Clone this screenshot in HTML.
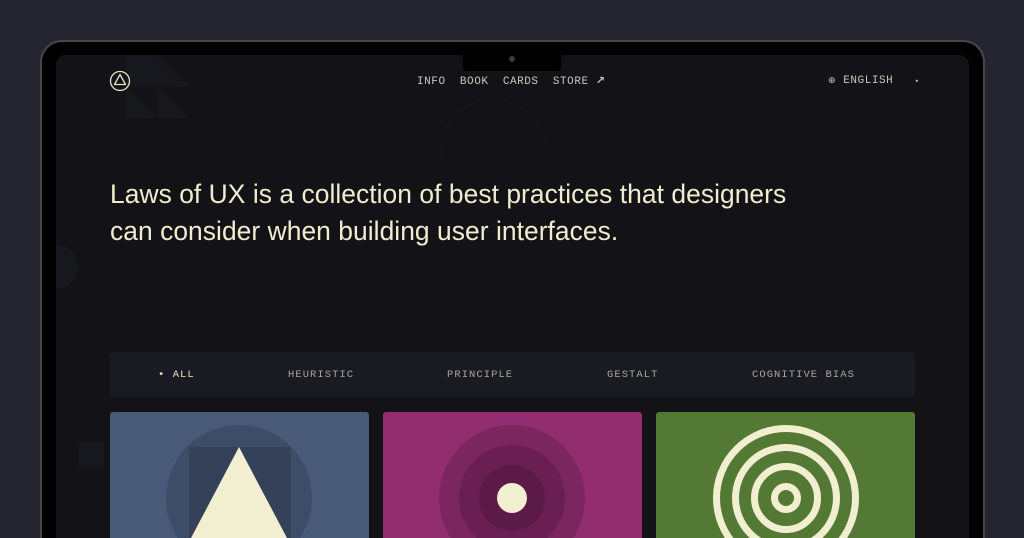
<!DOCTYPE html>
<html><head><style>
*{margin:0;padding:0;box-sizing:border-box}
html,body{width:1024px;height:538px;overflow:hidden}
body{background:#24252f;position:relative;font-family:"Liberation Sans",sans-serif}
.frame{position:absolute;left:40px;top:40px;width:945px;height:498px;border-radius:22px 22px 0 0;background:#000;border:2px solid #45464d;border-bottom:none}
.screen{position:absolute;left:56px;top:55px;width:913px;height:483px;background:#131317;border-radius:10px 10px 0 0;overflow:hidden}
.notch{position:absolute;left:463px;top:55px;width:98px;height:16px;background:#000;border-radius:0 0 3px 3px}
.cam{position:absolute;left:509px;top:56px;width:6px;height:6px;border-radius:50%;background:#3a3a40}
.nav{position:absolute;top:74px;font-family:"Liberation Mono",monospace;font-size:11px;color:#c9c7b6;letter-spacing:.55px}
.hero{position:absolute;left:110px;top:176px;font-size:26.4px;line-height:37px;color:#f0eccf;letter-spacing:.05px}
.bar{position:absolute;left:110px;top:352px;width:805px;height:45px;background:#1a1b22;border-radius:3px}
.f{position:absolute;top:369px;font-family:"Liberation Mono",monospace;font-size:10.5px;color:#a9a79a;letter-spacing:1.05px}
.card{position:absolute;top:412px;width:259px;height:126px;border-radius:3px 3px 0 0;overflow:hidden}
.card svg{display:block}
</style></head><body>
<div class="frame"></div>
<div class="screen">
<svg width="913" height="483" style="position:absolute;left:0;top:0">
<g fill="#17181d">
<polygon points="70,0 101,0 101,32"/><polygon points="101,0 133,32 101,32"/>
<polygon points="70,32 101,63 70,63"/><polygon points="101,32 133,63 101,63"/>
<polygon points="70,0 101,32 70,32"/>
<circle cx="0" cy="212" r="22"/>
<rect x="23" y="387" width="25" height="25"/>
</g>
<path d="M385 105 A50 50 0 0 1 490 90" stroke="#17181c" fill="none"/>
</svg>
</div>
<div class="notch"></div><div class="cam"></div>
<svg style="position:absolute;left:109px;top:70px" width="22" height="22" viewBox="0 0 22 22"><circle cx="11" cy="11" r="9.5" fill="none" stroke="#e8e4c4" stroke-width="1.3"/><path d="M11 4.5 L16.5 14.5 L5.5 14.5 Z" fill="none" stroke="#e8e4c4" stroke-width="1.3" stroke-linejoin="round"/></svg>
<div class="nav" style="left:417px">INFO&nbsp;&nbsp;BOOK&nbsp;&nbsp;CARDS&nbsp;&nbsp;STORE <span style="font-family:'DejaVu Sans';font-weight:bold">↗</span></div>
<div class="nav" style="left:828px;top:75px"><span style="font-family:'DejaVu Sans';font-size:9px">⊕</span>&nbsp;ENGLISH&nbsp;&nbsp;&nbsp;<span style="font-size:7px">▾</span></div>
<div class="hero">Laws of UX is a collection of best practices that designers<br>can consider when building user interfaces.</div>
<div class="bar"></div>
<div class="f" style="left:158px;color:#e8e4c4">• ALL</div>
<div class="f" style="left:288px">HEURISTIC</div>
<div class="f" style="left:447px">PRINCIPLE</div>
<div class="f" style="left:607px">GESTALT</div>
<div class="f" style="left:752px">COGNITIVE BIAS</div>
<div class="card" style="left:110px;background:#485a78"><svg width="259" height="126"><circle cx="129" cy="86" r="73" fill="#3d4d68"/><rect x="79" y="35" width="102" height="91" fill="#354159"/><polygon points="129,35 177,126 81,126" fill="#f2efd1"/></svg></div>
<div class="card" style="left:383px;background:#922d6f"><svg width="259" height="126"><circle cx="129" cy="86" r="73" fill="#7c2660"/><circle cx="129" cy="86" r="53" fill="#6a1f53"/><circle cx="129" cy="86" r="33" fill="#5b1a48"/><circle cx="129" cy="86" r="15" fill="#f2efd1"/></svg></div>
<div class="card" style="left:656px;background:#537935"><svg width="259" height="126"><g fill="none" stroke="#f2efd1" stroke-width="7"><circle cx="130" cy="86" r="69.5"/><circle cx="130" cy="86" r="50.5"/><circle cx="130" cy="86" r="31.5"/><circle cx="130" cy="86" r="11.5"/></g></svg></div>
</body></html>
